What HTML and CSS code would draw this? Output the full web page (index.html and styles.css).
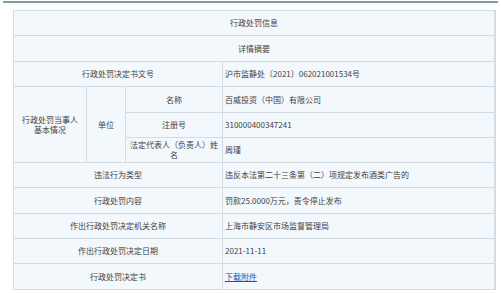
FILE: index.html
```html
<!DOCTYPE html>
<html lang="zh-CN">
<head>
<meta charset="utf-8">
<link rel="stylesheet" href="styles.css">
</head>
<body>
<div class="topline"></div>
<div class="sheet">
  <div class="cell c-all center">行政处罚信息</div>
  <div class="cell c-all center">详情摘要</div>

  <div class="cell c-label center">行政处罚决定书文号</div>
  <div class="cell value">沪市监静处〔2021〕062021001534号</div>

  <div class="cell c1 span3 center wrap">行政处罚当事人<br>基本情况</div>
  <div class="cell c2 span3 center">单位</div>
  <div class="cell c3 center">名称</div>
  <div class="cell value">百威投资（中国）有限公司</div>
  <div class="cell c3 center">注册号</div>
  <div class="cell value">310000400347241</div>
  <div class="cell c3 center two">法定代表人（负责人）姓名</div>
  <div class="cell value">周瑾</div>

  <div class="cell c-label center">违法行为类型</div>
  <div class="cell value">违反本法第二十三条第（二）项规定发布酒类广告的</div>
  <div class="cell c-label center">行政处罚内容</div>
  <div class="cell value">罚款25.0000万元，责令停止发布</div>
  <div class="cell c-label center">作出行政处罚决定机关名称</div>
  <div class="cell value">上海市静安区市场监督管理局</div>
  <div class="cell c-label center">作出行政处罚决定日期</div>
  <div class="cell value">2021-11-11</div>
  <div class="cell c-label center">行政处罚决定书</div>
  <div class="cell value"><a class="link" href="#">下载附件</a></div>
</div>
</body>
</html>
```

FILE: styles.css
```css
html, body {
  margin: 0;
  padding: 0;
  background: #ffffff;
}
body {
  width: 501px;
  height: 294px;
  overflow: hidden;
  font-family: "Noto Sans CJK SC", "Noto Sans", sans-serif;
  font-size: 8px;
  color: #3f3f3f;
}
.topline {
  margin: 1px 3px 0 3px;
  height: 2px;
  background: #7f9ea6;
}
.sheet {
  margin: 7px 0 0 13px;
  width: 481px;
  display: grid;
  grid-template-columns: 72px 38px 96px 271px;
  grid-template-rows: 24px 25px 24px 25px 24px 24px 24px 25px 24px 24px 25px;
  gap: 1px;
  padding: 1px;
  background: #d3dbe3;
}
.cell {
  background: #f3f8fd;
  display: flex;
  align-items: center;
  line-height: 10px;
  white-space: nowrap;
}
.center {
  justify-content: center;
  text-align: center;
}
.c-all {
  grid-column: 1 / 5;
}
.c-label {
  grid-column: 1 / 4;
}
.c1 {
  grid-column: 1;
}
.c2 {
  grid-column: 2;
}
.c3 {
  grid-column: 3;
}
.span3 {
  grid-row: span 3;
}
.wrap {
  white-space: normal;
}
.two {
  white-space: normal;
  padding: 0 4px;
}
.value {
  grid-column: 4;
  padding-left: 2px;
}
.link {
  color: #2a4ea6;
  text-decoration: underline;
}
```
